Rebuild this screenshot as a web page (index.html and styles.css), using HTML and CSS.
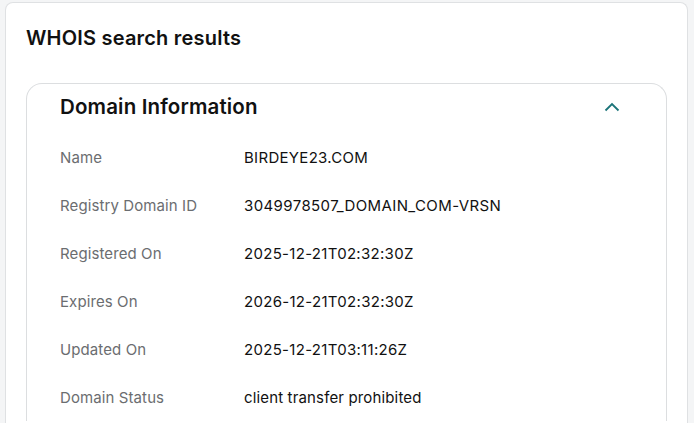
FILE: index.html
```html
<!DOCTYPE html>
<html>
<head>
<meta charset="utf-8">
<link rel="stylesheet" href="styles.css">
</head>
<body>
<div class="page">
  <section class="results">
    <h1 class="title">WHOIS search results</h1>
    <div class="panel">
      <div class="panel-head">
        <h2 class="panel-title">Domain Information</h2>
        <svg class="chevron" width="16" height="10" viewBox="0 0 16 10"><path d="M1.5 8.5 L8 2 L14.5 8.5" fill="none" stroke="#1b7479" stroke-width="1.8"/></svg>
      </div>
      <dl class="info">
        <div class="row"><dt>Name</dt><dd>BIRDEYE23.COM</dd></div>
        <div class="row"><dt>Registry Domain ID</dt><dd class="caps">3049978507_DOMAIN_COM-VRSN</dd></div>
        <div class="row"><dt>Registered On</dt><dd>2025-12-21T02:32:30Z</dd></div>
        <div class="row"><dt>Expires On</dt><dd>2026-12-21T02:32:30Z</dd></div>
        <div class="row"><dt>Updated On</dt><dd>2025-12-21T03:11:26Z</dd></div>
        <div class="row"><dt>Domain Status</dt><dd class="text">client transfer prohibited</dd></div>
      </dl>
    </div>
  </section>
</div>
</body>
</html>
```
FILE: styles.css
```css
html, body {
  margin: 0;
  padding: 0;
  height: 100%;
  overflow: hidden;
}
body {
  background: #f4f5f6;
  font-family: Inter, "Noto Sans", sans-serif;
  color: #111;
}
.page {
  padding: 2px 6px 0 5px;
}
.results {
  background: #fff;
  border: 1px solid #dfe1e3;
  border-bottom: none;
  border-radius: 8px 8px 0 0;
  padding: 21px 20px 0 20px;
  height: 400px;
}
.title {
  margin: 0;
  font-size: 20px;
  line-height: 28px;
  font-weight: 600;
  letter-spacing: 0.2px;
}
.panel {
  margin-top: 31px;
  border: 1px solid #dcdee0;
  border-bottom: none;
  border-radius: 16px 16px 0 0;
  padding: 0 46px 0 33px;
}
.panel-head {
  display: flex;
  align-items: center;
  justify-content: space-between;
  height: 46px;
}
.panel-title {
  margin: 0;
  font-size: 20.5px;
  line-height: 28px;
  font-weight: 600;
  letter-spacing: 0.15px;
}
.chevron {
  display: block;
}
.info {
  margin: 3px 0 0 0;
}
.row {
  display: flex;
  height: 48px;
  align-items: center;
  font-size: 15px;
}
.row dt {
  width: 184px;
  color: #6b6d70;
  letter-spacing: 0.1px;
}
.row dd {
  margin: 0;
  color: #111;
  letter-spacing: 0.3px;
}
.row dd.caps {
  letter-spacing: 0.4px;
}
.row dd.text {
  letter-spacing: 0.15px;
}
```
